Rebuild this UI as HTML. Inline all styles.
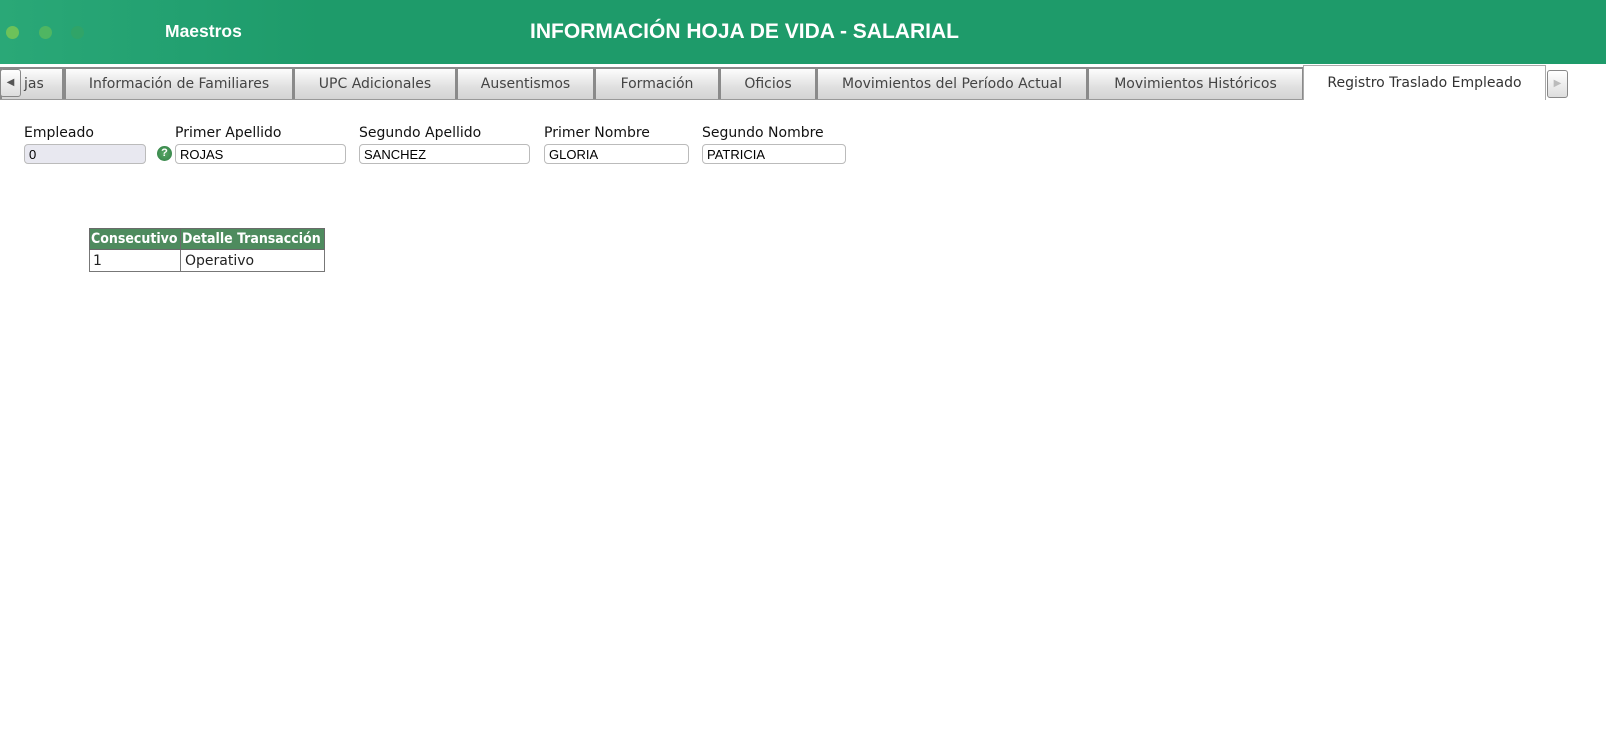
<!DOCTYPE html>
<html><head><meta charset="utf-8"><style>
*{box-sizing:border-box;margin:0;padding:0}
body{width:1606px;height:729px;background:#fff;font-family:"Segoe UI","DejaVu Sans","Liberation Sans",sans-serif;position:relative;overflow:hidden}
.hdr{position:absolute;left:0;top:0;width:1606px;height:64px;background:linear-gradient(90deg,#2aa877 0%,#22a070 12%,#1e9b6a 20%,#1e9b6a 100%)}
.dot{position:absolute;top:26px;width:13px;height:13px;border-radius:50%}
.t{position:absolute;color:#fff;font-weight:bold;font-family:"Liberation Sans",sans-serif}
.tab{position:absolute;top:67px;height:32px;border:2px solid #8a8a8a;border-bottom:none;background:linear-gradient(#fdfdfd,#e0e0e0 60%,#d4d4d4);font-size:14px;color:#444;text-align:center;line-height:30px;white-space:nowrap;overflow:hidden}
.lbl{position:absolute;top:125px;font-size:14px;color:#111}
.inp{position:absolute;top:144px;height:20px;border:1px solid #bbb;border-radius:4px;font-family:"Liberation Sans",sans-serif;font-size:13px;padding-left:4px;line-height:19px;color:#000}
table{position:absolute;left:89px;top:228px;border-collapse:collapse;font-size:14px}
th{background:#4e8b5e;color:#fff;font-weight:bold;border:1px solid #6a6a6a;padding:0 1px;height:21px;text-align:left;font-family:"DejaVu Sans Condensed","Liberation Sans Narrow",sans-serif;font-size:14px}
td{border:1px solid #777;height:22px;padding:0 4px;color:#222}
</style></head><body>
<div class="hdr">
<div class="dot" style="left:6px;background:#6cc25a"></div>
<div class="dot" style="left:39px;background:#4fb662"></div>
<div class="dot" style="left:71px;background:#30a468"></div>
<div class="t" style="left:165px;top:21px;font-size:17.5px">Maestros</div>
<div class="t" style="left:530px;top:20px;font-size:21px">INFORMACIÓN HOJA DE VIDA - SALARIAL</div>
</div>
<div style="position:absolute;left:0;top:64px;width:1606px;height:3px;background:#fff"></div>
<div class="tab" style="left:0;width:64px;text-align:left;padding-left:22px">jas</div>
<div style="position:absolute;left:0;top:69px;width:21px;height:28px;border:1px solid #888;border-radius:3px;background:linear-gradient(#fff,#ddd);font-size:10px;line-height:26px;text-align:center;color:#555">◀</div>
<div class="tab" style="left:64px;width:230px">Información de Familiares</div>
<div class="tab" style="left:293px;width:164px">UPC Adicionales</div>
<div class="tab" style="left:456px;width:139px">Ausentismos</div>
<div class="tab" style="left:594px;width:126px">Formación</div>
<div class="tab" style="left:719px;width:98px">Oficios</div>
<div class="tab" style="left:816px;width:272px">Movimientos del Período Actual</div>
<div class="tab" style="left:1087px;width:217px">Movimientos Históricos</div>
<div class="tab" style="left:1303px;width:243px;top:65px;height:35px;background:#fff;border:1px solid #aaa;border-bottom:none;line-height:34px;color:#333">Registro Traslado Empleado</div>
<div style="position:absolute;left:1547px;top:70px;width:21px;height:28px;border:1px solid #888;border-radius:3px;background:linear-gradient(#fff,#ddd);font-size:10px;line-height:26px;text-align:center;color:#bbb">▶</div>
<div style="position:absolute;left:0;top:99px;width:1303px;height:1px;background:#999"></div>

<div class="lbl" style="left:24px">Empleado</div>
<div class="lbl" style="left:175px">Primer Apellido</div>
<div class="lbl" style="left:359px">Segundo Apellido</div>
<div class="lbl" style="left:544px">Primer Nombre</div>
<div class="lbl" style="left:702px">Segundo Nombre</div>
<div class="inp" style="left:24px;width:122px;background:#e8e8f0">0</div>
<div style="position:absolute;left:157px;top:146px;width:15px;height:15px;border-radius:50%;background:radial-gradient(#5aa867,#2e7e43);color:#fff;font-size:11px;font-weight:bold;text-align:center;line-height:15px;font-family:'Liberation Sans',sans-serif">?</div>
<div class="inp" style="left:175px;width:171px">ROJAS</div>
<div class="inp" style="left:359px;width:171px">SANCHEZ</div>
<div class="inp" style="left:544px;width:145px">GLORIA</div>
<div class="inp" style="left:702px;width:144px">PATRICIA</div>

<table><tr><th style="width:91px">Consecutivo</th><th style="width:144px">Detalle Transacción</th></tr>
<tr><td style="padding-left:3px">1</td><td>Operativo</td></tr></table>
</body></html>
